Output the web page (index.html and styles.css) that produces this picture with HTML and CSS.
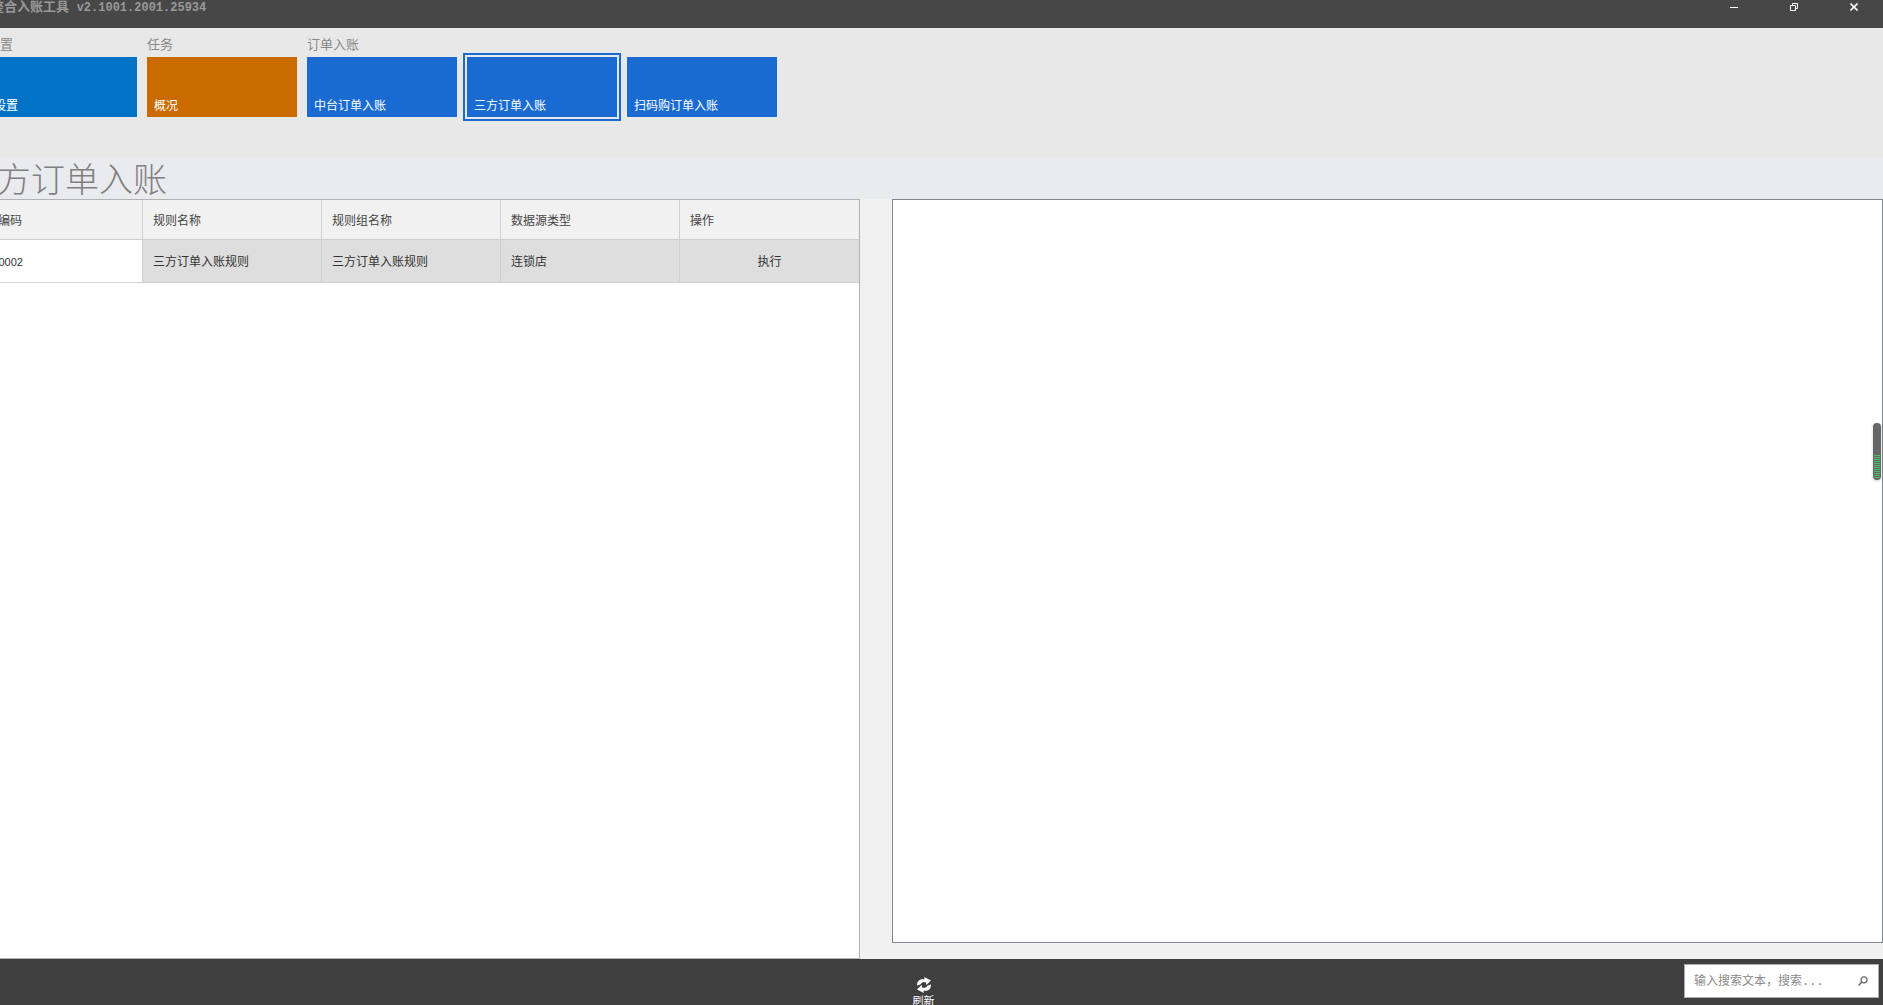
FILE: index.html
```html
<!DOCTYPE html>
<html lang="zh-CN">
<head>
<meta charset="utf-8">
<title>整合入账工具</title>
<link rel="stylesheet" href="styles.css">
</head>
<body>
<div class="app">
  <header class="titlebar">
    <span class="app-name">整合入账工具 <span class="version">v2.1001.2001.25934</span></span>
    <div class="window-controls">
      <button type="button" aria-label="最小化"><svg width="8" height="8" viewBox="0 0 8 8"><path d="M0 4.500H8" stroke="#fff"/></svg></button>
      <button type="button" aria-label="还原"><svg width="8" height="8" viewBox="0 0 8 8" fill="none" stroke="#fff"><path d="M.5 2.500h5v5h-5zM2.500 2.500V.5h5v5h-2"/></svg></button>
      <button type="button" aria-label="关闭"><svg width="8" height="8" viewBox="0 0 8 8"><path d="M.5.5l7 7M7.500.5l-7 7" stroke="#fff" stroke-width="1.600"/></svg></button>
    </div>
  </header>

  <nav class="tiles">
    <section class="group">
      <h2>设置</h2>
      <div class="group-row"><button type="button" class="tile settings">设置</button></div>
    </section>
    <section class="group">
      <h2>任务</h2>
      <div class="group-row"><button type="button" class="tile overview">概况</button></div>
    </section>
    <section class="group">
      <h2>订单入账</h2>
      <div class="group-row">
        <button type="button" class="tile">中台订单入账</button>
        <button type="button" class="tile selected">三方订单入账</button>
        <button type="button" class="tile">扫码购订单入账</button>
      </div>
    </section>
  </nav>

  <h1 class="page-title">三方订单入账</h1>

  <main class="workspace">
    <div class="grid-panel">
      <table>
        <thead>
          <tr><th>规则编码</th><th>规则名称</th><th>规则组名称</th><th>数据源类型</th><th>操作</th></tr>
        </thead>
        <tbody>
          <tr><td class="code">00000002</td><td>三方订单入账规则</td><td>三方订单入账规则</td><td>连锁店</td><td class="action"><button type="button">执行</button></td></tr>
        </tbody>
      </table>
    </div>
    <div class="output-panel"></div>
  </main>

  <footer class="bottombar">
    <button type="button" class="refresh">
      <svg width="14" height="16" viewBox="0 0 14 16" fill="#fff"><path d="M.2 8.600C-.4 4.500 2.500 2 6 2.200L7.600 2.300 7.200 0 14 3.400 9.400 8 8.800 5.300 6.500 5.200C4.500 5.200 4.200 6.400 3.800 7.200z"/><path d="M13.800 7.400c.6 4.100-2.300 6.600-5.800 6.400l-1.600-.1.4 2.300L0 12.600 4.600 8l.6 2.700 2.300.1c2 0 2.300-1.200 2.700-2z"/></svg>
      <span>刷新</span>
    </button>
    <label class="search">
      <input type="text" placeholder="输入搜索文本，搜索..." aria-label="搜索">
      <svg width="10" height="10" viewBox="0 0 10 10" fill="none" stroke="#666"><circle cx="6" cy="3.800" r="3" stroke-width="1.300"/><path d="M3.800 6L.6 9.400" stroke-width="1.500"/></svg>
    </label>
  </footer>
</div>
<div class="meter" aria-hidden="true"><div class="meter-fill"></div></div>
</body>
</html>
```
FILE: styles.css
```css
* { box-sizing: border-box; }

body {
  margin: 0;
  overflow: hidden;
  background: #f1f1f1;
  color: #333;
  font: 12px/16px "Liberation Sans", "Noto Sans CJK SC", sans-serif;
}

button {
  padding: 0;
  border: 0;
  background: none;
  color: inherit;
  font: inherit;
}

svg { display: block; }

.app {
  display: flex;
  flex-direction: column;
  height: 100vh;
  margin-right: -1px;
  margin-left: -37px;
}

.titlebar {
  display: flex;
  flex-shrink: 0;
  justify-content: space-between;
  height: 28px;
  padding-left: 28px;
  background: #474747;
  color: #999;
}

.app-name {
  font-size: 13px;
  line-height: 14px;
  font-weight: 700;
}

.version {
  margin-left: 4px;
  font-family: "Liberation Mono", monospace;
  font-size: 12px;
}

.window-controls { display: flex; }

.window-controls button {
  display: flex;
  justify-content: center;
  width: 60px;
  height: 28px;
  padding-top: 3px;
}

.tiles {
  display: flex;
  flex-shrink: 0;
  gap: 10px;
  height: 130px;
  padding: 9px 24px;
  background: #e8e8e8;
}

.group h2 {
  margin: 0 0 4px;
  color: #888;
  font-size: 13px;
  line-height: 16px;
  font-weight: 400;
}

.group-row {
  display: flex;
  gap: 10px;
}

.tile {
  display: flex;
  align-items: flex-end;
  width: 150px;
  height: 60px;
  padding: 0 7px 3px;
  background: #196bd2;
  color: #fff;
}

.tile.settings { background: #0173c7; }
.tile.overview { background: #ca6b00; }

.tile.selected {
  outline: 2px solid #196bd2;
  outline-offset: 2px;
}

.page-title {
  flex-shrink: 0;
  height: 41px;
  margin: 0;
  background: #eaebef;
  color: #808080;
  font-size: 34px;
  line-height: 44px;
  font-weight: 300;
}

.workspace {
  display: grid;
  flex: 1;
  grid-template-columns: minmax(0, 897fr) minmax(0, 991fr);
  gap: 32px;
  min-height: 0;
  padding-right: 1px;
}

.grid-panel {
  border: 1px solid #b0b3b3;
  background: #fff;
}

table {
  width: 100%;
  table-layout: fixed;
  border-collapse: separate;
  border-spacing: 0;
}

th, td {
  padding: 2px 10px 0;
  border-right: 1px solid #d0d0d0;
  border-bottom: 1px solid #d0d0d0;
  text-align: left;
  font-weight: 400;
}

th {
  height: 40px;
  background: #f1f1f1;
  color: #444;
}

td {
  height: 43px;
  background: #dedede;
}

th:last-child, td:last-child { border-right: 0; }

td.code {
  background: #fff;
  font-size: 11px;
}

td.action { text-align: center; }

.output-panel {
  margin-bottom: 16px;
  border: 1px solid #828790;
  background: #fff;
}

.bottombar {
  display: grid;
  flex-shrink: 0;
  grid-template-columns: 1fr auto 1fr;
  height: 46px;
  background: #3f3f3f;
}

.refresh {
  display: flex;
  grid-column: 2;
  flex-direction: column;
  align-items: center;
  height: 54px;
  padding-top: 18px;
  color: #fff;
  font-size: 11px;
  line-height: 16px;
}

.search {
  display: flex;
  grid-column: 3;
  justify-self: end;
  align-items: center;
  width: 195px;
  height: 34px;
  margin: 5px 5px 0 0;
  padding: 0 10px 0 9px;
  border: 1px solid #abadb3;
  background: #fff;
}

.search input {
  flex: 1;
  min-width: 0;
  padding: 1px 0 0;
  border: 0;
  outline: 0;
  background: none;
  font: 12px/16px "Liberation Mono", "Noto Sans CJK SC", monospace;
}

.search input::placeholder { color: #8a8a8a; }

/* Floating gauge over the right edge of the window */
.meter {
  position: absolute;
  top: 423px;
  right: 2px;
  display: flex;
  align-items: flex-end;
  width: 8px;
  height: 57px;
  padding: 1px;
  border-radius: 4px;
  background: #666;
  box-shadow: 0 1px 3px rgba(0, 0, 0, 0.2);
}

.meter-fill {
  width: 6px;
  height: 24px;
  border-radius: 0 0 3px 3px;
  background: repeating-linear-gradient(#43c463 0 1px, #666 1px 2px);
}
```
